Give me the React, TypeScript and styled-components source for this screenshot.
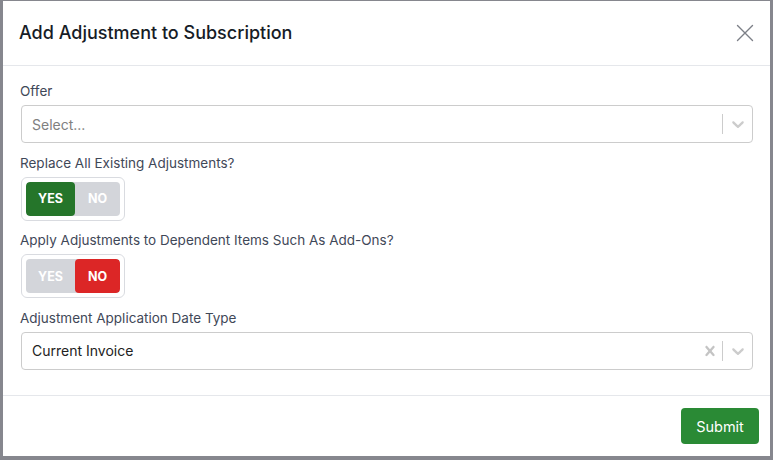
import React from "react";
import styled, { createGlobalStyle } from "styled-components";

const Global = createGlobalStyle`
  html, body { margin: 0; padding: 0; background: #86878e; }
  body { font-family: Inter, "Noto Sans", "Liberation Sans", sans-serif; -webkit-font-smoothing: antialiased; }
  * { box-sizing: border-box; }
`;

const Page = styled.div`
  width: 773px;
  height: 460px;
  padding: 1px 3px 0 3px;
  overflow: hidden;
`;

const Modal = styled.div`
  width: 767px;
  height: 455px;
  background: #ffffff;
  display: flex;
  flex-direction: column;
`;

const Header = styled.div`
  height: 65px;
  flex: none;
  display: flex;
  align-items: center;
  justify-content: space-between;
  padding: 0 16px 0 16px;
  border-bottom: 1px solid #e5e7eb;
`;

const Title = styled.h2`
  margin: 0;
  font-size: 18px;
  font-weight: 500;
  color: #171c26;
  line-height: 24px;
`;

const CloseButton = styled.button`
  border: none;
  background: none;
  padding: 0;
  width: 18px;
  height: 18px;
  display: flex;
  align-items: center;
  justify-content: center;
  cursor: pointer;
  color: #7c7f87;
`;

const Body = styled.div`
  flex: 1;
  display: flex;
  flex-direction: column;
  gap: 10.5px;
  padding: 16px 17px 0 18px;
`;

const Field = styled.div`
  display: flex;
  flex-direction: column;
  gap: 5px;
`;

const Label = styled.label`
  font-size: 13.5px;
  line-height: 18px;
  color: #3f4858;
  margin-left: -1px;
`;

const Control = styled.div`
  height: 38px;
  border: 1px solid #cccccc;
  border-radius: 4px;
  display: flex;
  align-items: center;
  background: #fff;
`;

const Value = styled.div<{ $placeholder?: boolean }>`
  flex: 1;
  padding: 0 10px;
  font-size: 14px;
  color: ${(p) => (p.$placeholder ? "#808080" : "#222222")};
`;

const Indicators = styled.div`
  display: flex;
  align-items: center;
  align-self: stretch;
`;

const ClearIcon = styled.div`
  width: 20px;
  height: 20px;
  margin-right: 2px;
  color: #c4c4c4;
  display: flex;
`;

const Separator = styled.span`
  width: 1px;
  align-self: stretch;
  margin: 8px 0;
  background: #cccccc;
`;

const Chevron = styled.div`
  width: 29px;
  display: flex;
  justify-content: center;
  color: #cccccc;
`;

const ToggleFrame = styled.div`
  width: 104px;
  height: 44px;
  border: 1px solid #d9dbe0;
  border-radius: 6px;
  padding: 4px;
  display: flex;
`;

const ToggleInner = styled.div`
  flex: 1;
  display: flex;
  border-radius: 4px;
  background: #d3d5da;
  overflow: hidden;
`;

const Segment = styled.div<{ $bg?: string; $w: number }>`
  width: ${(p) => p.$w}px;
  display: flex;
  align-items: center;
  justify-content: center;
  font-size: 12.5px;
  font-weight: 700;
  color: #ffffff;
  border-radius: 4px;
  background: ${(p) => p.$bg || "transparent"};
`;

const Footer = styled.div`
  height: 61px;
  flex: none;
  border-top: 1px solid #e5e7eb;
  display: flex;
  align-items: center;
  justify-content: flex-end;
  padding: 0 11px;
`;

const SubmitButton = styled.button`
  width: 78px;
  height: 36px;
  border: none;
  border-radius: 4px;
  background: #2a8a35;
  color: #ffffff;
  font-family: inherit;
  font-size: 14.5px;
  font-weight: 400;
  cursor: pointer;
`;

const ChevronSvg = () => (
  <svg width="20" height="20" viewBox="0 0 20 20" fill="currentColor">
    <path d="M4.516 7.548c0.436-0.446 1.043-0.481 1.576 0l3.908 3.747 3.908-3.747c0.533-0.481 1.141-0.446 1.574 0 0.436 0.445 0.408 1.197 0 1.615-0.406 0.418-4.695 4.502-4.695 4.502-0.217 0.223-0.502 0.335-0.787 0.335s-0.57-0.112-0.789-0.335c0 0-4.287-4.084-4.695-4.502s-0.436-1.17 0-1.615z" />
  </svg>
);

const CrossSvg = () => (
  <svg width="20" height="20" viewBox="0 0 20 20" fill="currentColor">
    <path d="M14.348 14.849c-0.469 0.469-1.229 0.469-1.697 0l-2.651-3.030-2.651 3.029c-0.469 0.469-1.229 0.469-1.697 0-0.469-0.469-0.469-1.229 0-1.697l2.758-3.15-2.759-3.152c-0.469-0.469-0.469-1.228 0-1.697s1.228-0.469 1.697 0l2.652 3.031 2.651-3.031c0.469-0.469 1.228-0.469 1.697 0s0.469 1.229 0 1.697l-2.758 3.152 2.758 3.150c0.469 0.469 0.469 1.229 0 1.698z" />
  </svg>
);

const Select = ({ value, placeholder, clearable }: { value?: string; placeholder?: string; clearable?: boolean }) => (
  <Control>
    <Value $placeholder={!value}>{value || placeholder}</Value>
    <Indicators>
      {clearable && (
        <ClearIcon>
          <CrossSvg />
        </ClearIcon>
      )}
      <Separator />
      <Chevron>
        <ChevronSvg />
      </Chevron>
    </Indicators>
  </Control>
);

const Toggle = ({ yes }: { yes: boolean }) => (
  <ToggleFrame>
    <ToggleInner>
      <Segment $w={49} $bg={yes ? "#25752a" : undefined}>YES</Segment>
      <Segment $w={45} $bg={!yes ? "#dc2626" : undefined}>NO</Segment>
    </ToggleInner>
  </ToggleFrame>
);

export default function App() {
  return (
    <>
      <Global />
      <Page>
        <Modal>
          <Header>
            <Title>Add Adjustment to Subscription</Title>
            <CloseButton aria-label="Close">
              <svg width="18" height="18" viewBox="0 0 18 18" fill="none" stroke="currentColor" strokeWidth="1.4" strokeLinecap="round">
                <path d="M1.5 1.5L16.5 16.5M16.5 1.5L1.5 16.5" />
              </svg>
            </CloseButton>
          </Header>
          <Body>
            <Field>
              <Label>Offer</Label>
              <Select placeholder="Select..." />
            </Field>
            <Field>
              <Label>Replace All Existing Adjustments?</Label>
              <Toggle yes={true} />
            </Field>
            <Field>
              <Label>Apply Adjustments to Dependent Items Such As Add-Ons?</Label>
              <Toggle yes={false} />
            </Field>
            <Field>
              <Label>Adjustment Application Date Type</Label>
              <Select value="Current Invoice" clearable />
            </Field>
          </Body>
          <Footer>
            <SubmitButton>Submit</SubmitButton>
          </Footer>
        </Modal>
      </Page>
    </>
  );
}
